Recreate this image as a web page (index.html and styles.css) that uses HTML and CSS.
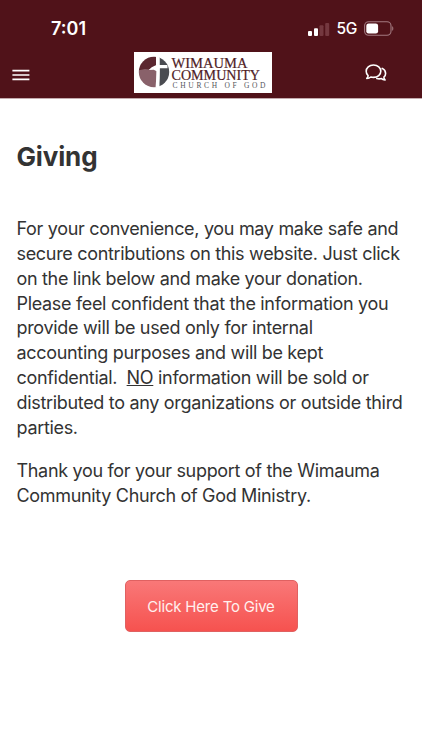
FILE: index.html
```html
<!DOCTYPE html>
<html lang="en">
<head>
  <meta charset="UTF-8">
  <meta name="viewport" content="width=device-width, initial-scale=1.0">
  <title>Giving</title>
  <link rel="stylesheet" href="styles.css">
</head>
<body>
  <header>
    <div class="status">
      <span class="time">7:01</span>
      <div class="signals">
        <svg class="bars" width="22" height="14" viewBox="0 0 22 14">
          <rect x="0" y="9" width="4" height="5" rx="1" fill="#fff"/>
          <rect x="6" y="6.3" width="4" height="7.7" rx="1" fill="#fff"/>
          <rect x="11.5" y="3.3" width="4" height="10.7" rx="1" fill="#74383f"/>
          <rect x="17.2" y="1" width="4" height="13" rx="1" fill="#74383f"/>
        </svg>
        <span class="network">5G</span>
        <svg class="battery" width="30" height="15" viewBox="0 0 30 15">
          <rect x="0.6" y="0.8" width="26.4" height="13.4" rx="4" fill="none" stroke="#a27a80" stroke-width="1.1"/>
          <rect x="2.3" y="2.5" width="11.8" height="10" rx="2.3" fill="#fff"/>
          <path d="M28.2 5.2c1.5.6 1.5 4 0 4.6z" fill="#a27a80"/>
        </svg>
      </div>
    </div>
    <nav>
      <svg class="menu" width="18" height="12" viewBox="0 0 18 12">
        <path d="M0.4 1.6h17M0.4 6h17M0.4 10.4h17" stroke="#fff" stroke-width="1.7"/>
      </svg>
      <svg class="logo" width="138" height="41" viewBox="0 0 138 41">
        <rect width="138" height="41" fill="#fff"/>
        <clipPath id="seal"><circle cx="20" cy="20" r="15.2"/></clipPath>
        <g clip-path="url(#seal)">
          <path d="M4 4h18v13l-4 1-14 1z" fill="#5b2730"/>
          <path d="M4 18.500l7-1.500 4 .5 2.500-1.500 5 2v18H4z" fill="#89616a"/>
          <path d="M25.500 4H36v32H25.500z" fill="#4a4c51"/>
          <path d="M22.300 4h3.200v9h8v3.200h-7.700l-.3 10-1 10h-3l1.200-17-3-1.500-5 .3 3-2.700 4.600-2.300z" fill="#fff"/>
        </g>
        <text class="logo-name" x="37.500" y="16.300" textLength="76" lengthAdjust="spacingAndGlyphs">WIMAUMA</text>
        <text class="logo-name" x="37.500" y="27.600" textLength="88.500" lengthAdjust="spacingAndGlyphs">COMMUNITY</text>
        <text class="logo-sub" x="38.500" y="35.500" textLength="93">CHURCH OF GOD</text>
      </svg>
      <svg class="chat" width="22" height="18" viewBox="0 0 22 18" fill="none" stroke="#fff" stroke-width="1.6" stroke-linejoin="round" stroke-linecap="round">
        <path d="M8.500 1c4.300 0 7.300 2.700 7.300 6.200s-3 6.200-7.300 6.200c-1 0-1.900-.1-2.700-.4-1.100.9-2.500 1.400-4 1.400.9-.8 1.300-1.700 1.300-2.700C1.800 10.500 1.200 9 1.200 7.200 1.200 3.700 4.200 1 8.500 1z"/>
        <path d="M17.200 4.400c2.100 1 3.400 2.800 3.400 5 0 1.500-.6 2.700-1.700 3.700 0 1.100.4 2 1.200 2.900-1.500-.1-2.700-.5-3.700-1.400-1.500.4-3.100.4-4.600-.1"/>
      </svg>
    </nav>
  </header>
  <main>
    <h1>Giving</h1>
    <p>For your convenience, you may make safe and<br>
      secure contributions on this website. Just click<br>
      on the link below and make your donation.<br>
      Please feel confident that the information you<br>
      provide will be used only for internal<br>
      accounting purposes and will be kept<br>
      confidential.&nbsp; <u>NO</u> information will be sold or<br>
      distributed to any organizations or outside third<br>
      parties.</p>
    <p>Thank you for your support of the Wimauma<br>
      Community Church of God Ministry.</p>
    <a class="give">Click Here To Give</a>
  </main>
</body>
</html>
```
FILE: styles.css
```css
html,body {
  margin: 0;
  padding: 0;
  font-family: Inter, sans-serif;
  color: #333;
  background: #fff;
}
header {
  box-sizing: border-box;
  height: 99px;
  background-color: #501219;
  border-bottom: 1px solid #c4abae;
  color: #fff;
}
.status {
  display: flex;
  justify-content: space-between;
  align-items: center;
  height: 52px;
  padding: 5px 28px 0 51px;
  box-sizing: border-box;
}
.time {
  font-size: 18px;
  font-weight: 600;
}
.signals {
  display: flex;
  align-items: center;
}
.network {
  font-size: 15.5px;
  font-weight: 500;
  letter-spacing: -0.3px;
  margin: 0 7px 0 6.5px;
}
nav {
  display: flex;
  align-items: center;
  height: 41px;
  padding: 0 35px 0 12px;
}
.menu {
  margin: 4px 104px 0 0;
}
.logo-name {
  font-family: "Liberation Serif", serif;
  font-size: 14.8px;
  fill: #501c26;
  stroke: #501c26;
  stroke-width: 0.2px;
}
.logo-sub {
  font-family: "Liberation Serif", serif;
  font-size: 7.5px;
  fill: #55565a;
}
.chat {
  margin-left: auto;
}
main {
  display: flex;
  flex-direction: column;
  padding: 41px 0 0 16.5px;
}
h1 {
  margin: 0 0 43px;
  font-size: 26px;
  line-height: 34px;
  letter-spacing: -0.15px;
}
p {
  margin: 0 0 18.5px;
  font-size: 18px;
  line-height: 24.85px;
  letter-spacing: -0.32px;
  white-space: nowrap;
}
.give {
  box-sizing: border-box;
  width: 173px;
  height: 52px;
  margin: 53px 0 0 108px;
  border: 1px solid #e06161;
  border-radius: 5px;
  background: linear-gradient(#f97878, #f6524f);
  color: #fff0ee;
  font-size: 15px;
  letter-spacing: -0.2px;
  line-height: 51px;
  text-align: center;
}
```
